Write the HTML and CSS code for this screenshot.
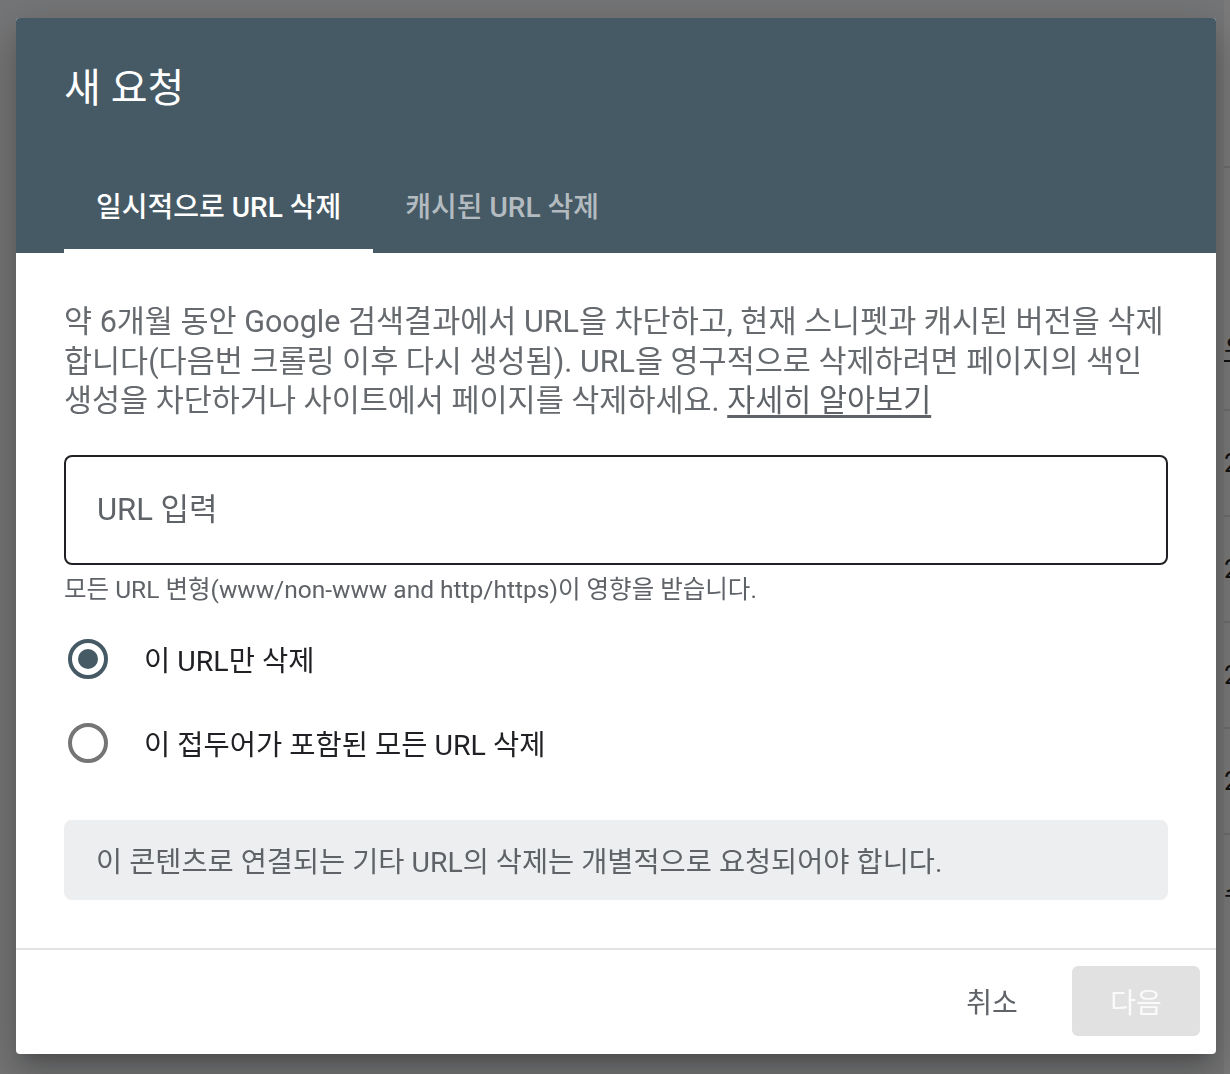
FILE: index.html
```html
<!DOCTYPE html>
<html lang="ko">
<head>
    <meta charset="UTF-8">
    <meta name="viewport" content="width=device-width, initial-scale=1.0">
    <title>새 요청</title>
    <link rel="stylesheet" href="styles.css">
</head>
<body>
    <div class="page">
        <div class="page-side"></div>
        <div class="page-table">
            <div class="page-top"></div>
            <div class="page-row page-head"><span>우</span></div>
            <div class="page-row"><span>2</span></div>
            <div class="page-row"><span>2</span></div>
            <div class="page-row"><span>2</span></div>
            <div class="page-row"><span>2</span></div>
            <div class="page-row page-last"><span>수</span></div>
        </div>
    </div>

    <div class="scrim">
        <div class="dialog">
            <div class="dialog-header">
                <h1 class="dialog-title">새 요청</h1>
                <div class="tabs">
                    <div class="tab active">일시적으로 URL 삭제</div>
                    <div class="tab">캐시된 URL 삭제</div>
                </div>
            </div>

            <div class="dialog-body">
                <p class="intro">
                    약 6개월 동안 Google 검색결과에서 URL을 차단하고, 현재 스니펫과 캐시된 버전을 삭제합니다(다음번 크롤링 이후 다시 생성됨). URL을 영구적으로 삭제하려면 페이지의 색인<br>생성을 차단하거나 사이트에서 페이지를 삭제하세요. <a href="#" class="learn-more">자세히 알아보기</a>
                </p>

                <div class="url-field">
                    <input type="text" class="url-input" placeholder="URL 입력">
                </div>
                <div class="helper">모든 URL 변형(www/non-www and http/https)이 영향을 받습니다.</div>

                <div class="radio-group">
                    <label class="radio-row">
                        <span class="radio checked"></span>
                        <span class="radio-label">이 URL만 삭제</span>
                    </label>
                    <label class="radio-row">
                        <span class="radio"></span>
                        <span class="radio-label">이 접두어가 포함된 모든 URL 삭제</span>
                    </label>
                </div>

                <div class="notice">이 콘텐츠로 연결되는 기타 URL의 삭제는 개별적으로 요청되어야 합니다.</div>
            </div>

            <div class="dialog-footer">
                <button class="btn btn-cancel">취소</button>
                <button class="btn btn-next" disabled>다음</button>
            </div>
        </div>
    </div>
</body>
</html>
```

FILE: styles.css
```css
body {
    margin: 0;
    font-family: Roboto, "Noto Sans CJK KR", sans-serif;
    background: #fff;
    overflow: hidden;
}

/* page behind the dialog */
.page {
    display: flex;
    height: 1074px;
}
.page-side {
    width: 1224px;
    flex-shrink: 0;
    background: #f3f4f6;
}
.page-table {
    flex: 1;
    background: #fff;
}
.page-top {
    height: 166px;
    border-bottom: 2px solid #e4e4e4;
}
.page-row {
    height: 104px;
    border-bottom: 2px solid #e4e4e4;
    display: flex;
    align-items: center;
    font-size: 26px;
    color: #202124;
}
.page-head {
    height: 241px;
    align-items: flex-end;
}
.page-head span {
    text-decoration: underline;
    margin-bottom: 44px;
}
.page-last {
    border-bottom: none;
    align-items: flex-start;
}
.page-last span {
    margin-top: 38px;
}

/* dialog */
.scrim {
    position: fixed;
    inset: 0;
    background: rgba(0, 0, 0, 0.52);
}
.dialog {
    margin: 18px 0 0 16px;
    width: 1200px;
    height: 1036px;
    background: #fff;
    border-radius: 4px;
    overflow: hidden;
    display: flex;
    flex-direction: column;
    box-shadow: 0 11px 15px -7px rgba(0,0,0,0.2), 0 24px 38px 3px rgba(0,0,0,0.14), 0 9px 46px 8px rgba(0,0,0,0.12);
}
.dialog-header {
    background: #465a65;
    padding: 47px 0 0 48px;
}
.dialog-title {
    margin: 0 0 44px 0;
    font-size: 40px;
    line-height: 48px;
    font-weight: 400;
    color: #fff;
}
.tabs {
    display: flex;
}
.tab {
    height: 96px;
    padding: 4px 32px 0 32px;
    box-sizing: border-box;
    display: flex;
    align-items: center;
    font-size: 28px;
    font-weight: 500;
    color: rgba(255, 255, 255, 0.62);
    border-bottom: 4px solid transparent;
}
.tab.active {
    color: #fff;
    border-bottom-color: #fff;
}

.dialog-body {
    flex: 1;
    padding: 49px 48px 0 48px;
}
.intro {
    margin: 0;
    font-size: 30.5px;
    line-height: 39.5px;
    color: #666a6e;
}
.learn-more {
    color: #5f6368;
    text-decoration: underline;
    text-underline-offset: 4px;
}

.url-field {
    margin-top: 34px;
}
.url-input {
    display: block;
    width: 100%;
    height: 110px;
    box-sizing: border-box;
    border: 2px solid #202124;
    border-radius: 8px;
    padding: 0 31px;
    font-family: inherit;
    font-size: 31px;
    color: #202124;
    outline: none;
}
.url-input::placeholder {
    color: #5f6368;
}
.helper {
    margin-top: 9px;
    font-size: 24.5px;
    line-height: 32px;
    color: #5f6368;
}

.radio-group {
    margin-top: 11px;
}
.radio-row {
    display: flex;
    align-items: center;
    height: 84px;
}
.radio {
    width: 40px;
    height: 40px;
    box-sizing: border-box;
    border: 4px solid #757575;
    border-radius: 50%;
    margin-left: 4px;
    margin-right: 36px;
    display: flex;
    align-items: center;
    justify-content: center;
}
.radio.checked {
    border-color: #455a64;
}
.radio.checked::after {
    content: "";
    width: 20px;
    height: 20px;
    border-radius: 50%;
    background: #455a64;
}
.radio-label {
    font-size: 28.5px;
    color: #202124;
}

.notice {
    margin-top: 35px;
    height: 80px;
    box-sizing: border-box;
    padding: 0 32px;
    display: flex;
    align-items: center;
    background: #eceef0;
    border-radius: 8px;
    font-size: 28.4px;
    color: #5f6368;
}

.dialog-footer {
    border-top: 2px solid #e3e3e3;
    padding: 16px 16px 18px 16px;
    display: flex;
    justify-content: flex-end;
    gap: 16px;
}
.btn {
    width: 128px;
    height: 70px;
    border: none;
    border-radius: 6px;
    font-family: inherit;
    font-size: 28px;
    background: transparent;
    cursor: pointer;
}
.btn-cancel {
    color: #5f6368;
}
.btn-next {
    background: #e1e1e1;
    color: #fafafa;
}
```
